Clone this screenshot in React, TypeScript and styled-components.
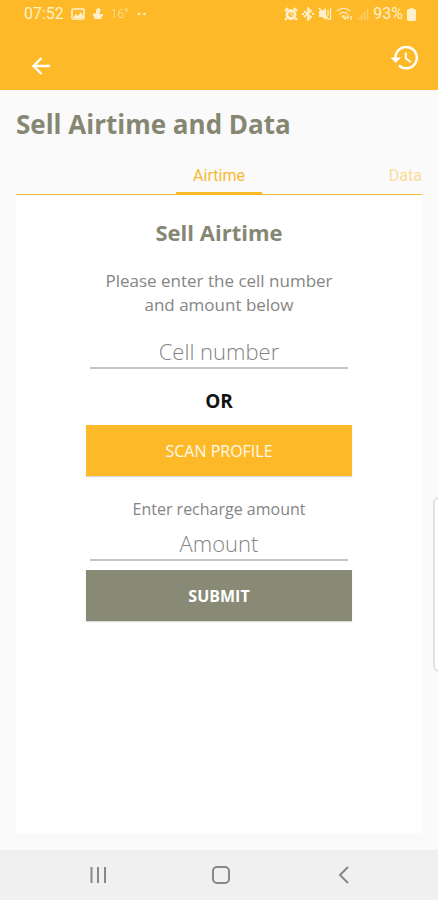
import React from "react";
import styled, { createGlobalStyle } from "styled-components";

const amber = "#fdb927";
const olive = "#868773";

const GlobalStyle = createGlobalStyle`
  *, *::before, *::after { box-sizing: border-box; }
  body { margin: 0; background: #fafafa; font-family: "Open Sans", sans-serif; }
  h1, h2, p { margin: 0; }
  button, input { font-family: inherit; }
`;

const Screen = styled.div`
  position: relative;
  display: flex;
  flex-direction: column;
  min-height: 100vh;
  overflow: hidden;
`;

const Header = styled.header`
  background: ${amber};
`;

const StatusBar = styled.div`
  display: flex;
  align-items: center;
  justify-content: space-between;
  height: 28px;
  padding: 0 22px 0 24px;
  color: #fff0cc;
  font-family: Roboto, sans-serif;
  font-size: 16px;
  line-height: 28px;
`;

const StatusGroup = styled.div<{ $gap: number }>`
  display: flex;
  align-items: center;
  gap: ${(p) => p.$gap}px;
  svg { display: block; flex: none; }
`;

const Temperature = styled.span`
  font-size: 12px;
  font-weight: 300;
  opacity: 0.8;
`;

const AppBar = styled.div`
  display: flex;
  align-items: flex-start;
  justify-content: space-between;
  height: 62px;
  padding: 15px 18px 0 27px;
`;

const IconButton = styled.button<{ $drop?: boolean }>`
  display: flex;
  padding: 0;
  margin-top: ${(p) => (p.$drop ? 9 : 0)}px;
  border: 0;
  background: none;
  color: #fff;
`;

const Main = styled.main`
  display: flex;
  flex: 1;
  flex-direction: column;
  padding: 17px 16px;
`;

const Title = styled.h1`
  color: ${olive};
  font-size: 26px;
  font-weight: 700;
  line-height: 34px;
`;

const Tabs = styled.div`
  display: grid;
  grid-template-columns: 1fr auto 1fr;
  height: 41px;
  margin-top: 13px;
  box-shadow: inset 0 -1px ${amber};
`;

const Tab = styled.button<{ $active?: boolean }>`
  grid-column: ${(p) => (p.$active ? 2 : 3)};
  justify-self: ${(p) => (p.$active ? "center" : "end")};
  padding: 3px ${(p) => (p.$active ? 17 : 0)}px 0;
  border: 0;
  box-shadow: ${(p) => (p.$active ? `inset 0 -3px ${amber}` : "none")};
  background: none;
  color: ${(p) => (p.$active ? "#f6b836" : "#fbdc9c")};
  font-family: Roboto, sans-serif;
  font-size: 16px;
  line-height: 20px;
`;

const Panel = styled.form`
  display: flex;
  flex: 1;
  flex-direction: column;
  padding: 21px 70px;
  background: #fff;
  text-align: center;
`;

const Heading = styled.h2`
  color: ${olive};
  font-size: 22px;
  font-weight: 700;
  line-height: 32px;
`;

const Intro = styled.p`
  margin-top: 21px;
  padding: 0 12px;
  color: #858585;
  font-size: 17px;
  line-height: 24px;
`;

const Field = styled.input<{ $gap: number }>`
  height: 33px;
  margin: ${(p) => p.$gap}px 4px 0;
  padding: 0 0 2px;
  min-width: 0;
  border: 0;
  border-bottom: 2px solid #c4c4c4;
  border-radius: 0;
  outline: 0;
  background: none;
  color: #666;
  font-size: 22px;
  font-weight: 300;
  text-align: center;
  &::placeholder { color: #858585; opacity: 1; }
`;

const Or = styled.p`
  margin-top: 20px;
  color: #111;
  font-size: 19px;
  font-weight: 700;
  line-height: 24px;
`;

const Action = styled.button<{ $primary?: boolean }>`
  height: 51px;
  margin-top: ${(p) => (p.$primary ? 9 : 12)}px;
  padding: 0;
  border: 0;
  background: ${(p) => (p.$primary ? "#898a76" : amber)};
  color: ${(p) => (p.$primary ? "#fff" : "#fffaf0")};
  font-size: 16px;
  font-weight: ${(p) => (p.$primary ? 700 : 400)};
  box-shadow: 0 1px 1px rgba(0, 0, 0, 0.15);
`;

const AmountLabel = styled.label`
  margin-top: 21px;
  color: #858585;
  font-size: 16px;
  line-height: 24px;
`;

const EdgeHandle = styled.div`
  position: absolute;
  top: 497px;
  right: -8px;
  width: 13px;
  height: 175px;
  border: 2px solid #e2e2e2;
  border-radius: 6px;
  background: #fff;
`;

const NavBar = styled.nav`
  display: flex;
  align-items: center;
  justify-content: space-between;
  height: 50px;
  padding: 0 82px 0 86px;
  background: #f0f0f0;
`;

const NavButton = styled.button`
  display: flex;
  padding: 0;
  border: 0;
  background: none;
  color: #888;
`;

const PictureIcon = () => (
  <svg width="14" height="12" viewBox="0 0 14 12">
    <rect x="1" y="1" width="12" height="10" rx="1" fill="none" stroke="currentColor" strokeWidth="1.6" />
    <path d="M2 10 5 6l2 2 3-4 3 6z" fill="currentColor" />
  </svg>
);

const WeatherIcon = () => (
  <svg width="12" height="12" viewBox="0 0 12 12" fill="currentColor">
    <path d="M6 0c2 0 3 2 2 4l-1 2h4v2L9 9l1 2H2l1-2-2-1V6l3-1V2z" />
  </svg>
);

const AlarmIcon = () => (
  <svg width="14" height="14" viewBox="0 0 14 14" fill="none" stroke="currentColor">
    <circle cx="7" cy="7.5" r="4" strokeWidth="2.8" />
    <path d="M1 4 4 1M13 4l-3-3M3 11l-2 2M11 11l2 2" strokeWidth="2.4" />
    <path d="M7 5v3h2" strokeWidth="1" />
  </svg>
);

const BluetoothIcon = () => (
  <svg width="12" height="14" viewBox="0 0 12 14" fill="none" stroke="currentColor" strokeWidth="1.7">
    <path d="m2 4 7 6-3 3V1l3 3-7 6" />
    <path d="M0 7h2M10 7h2" strokeWidth="2" />
  </svg>
);

const MuteIcon = () => (
  <svg width="14" height="14" viewBox="0 0 14 14">
    <path d="M1 4h3l4-3v12L4 10H1z" fill="currentColor" />
    <path d="M1 1l10 12" fill="none" stroke="currentColor" strokeWidth="1.6" />
    <path d="M10 3v6M12.5 1v12" fill="none" stroke="currentColor" strokeWidth="1.3" />
  </svg>
);

const WifiIcon = () => (
  <svg width="17" height="14" viewBox="0 0 17 14" fill="none" stroke="currentColor" strokeWidth="1.3">
    <path d="M1 4c4-3.6 9-3.6 13 0M3.500 7c3-2.500 5-2.500 8 0M5.500 9.500c1.500-1 2.500-1 4 0" />
    <path d="m7 10 2 2 2-2M12 8v4M15 9v4" />
  </svg>
);

const SignalIcon = () => (
  <svg width="12" height="12" viewBox="0 0 12 12" fill="none" stroke="currentColor" opacity="0.4">
    <path d="M1.500 9v3M4.500 7v5M7.500 4v8M10.500 1v11" strokeWidth="1.6" />
  </svg>
);

const BatteryIcon = () => (
  <svg width="9" height="13" viewBox="0 0 9 13" fill="currentColor">
    <path d="M3 0h3v1h2l1 1v10l-1 1H1l-1-1V2l1-1h2z" />
  </svg>
);

const BackArrow = () => (
  <svg width="28" height="28" viewBox="0 0 28 28" fill="none" stroke="currentColor" strokeWidth="2.4">
    <path d="M23 14H7M14.500 6 6.500 14l8 8" />
  </svg>
);

const HistoryIcon = () => (
  <svg width="30" height="30" viewBox="0 0 30 30" fill="none" stroke="currentColor" strokeWidth="2.500">
    <path d="M5.500 15.500a10.700 10.700 0 1 1 3.400 7" />
    <path d="M0.500 14.500h10.500L5.700 20z" fill="currentColor" stroke="none" />
    <path d="M15.800 9.500V15.500l5 3.500" strokeWidth="2" />
  </svg>
);

export default function App() {
  return (
    <>
      <GlobalStyle />
      <Screen>
        <Header>
          <StatusBar>
            <StatusGroup $gap={7}>
              <span>07:52</span>
              <PictureIcon />
              <WeatherIcon />
              <Temperature>16°</Temperature>
              <svg width="12" height="4" viewBox="0 0 12 4" fill="currentColor">
                <circle cx="3" cy="2" r="1.300" />
                <circle cx="8.500" cy="2" r="1.300" />
              </svg>
            </StatusGroup>
            <StatusGroup $gap={4}>
              <AlarmIcon />
              <BluetoothIcon />
              <MuteIcon />
              <WifiIcon />
              <SignalIcon />
              <span>93%</span>
              <BatteryIcon />
            </StatusGroup>
          </StatusBar>
          <AppBar>
            <IconButton $drop type="button" aria-label="Back">
              <BackArrow />
            </IconButton>
            <IconButton type="button" aria-label="History">
              <HistoryIcon />
            </IconButton>
          </AppBar>
        </Header>
        <Main>
          <Title>Sell Airtime and Data</Title>
          <Tabs role="tablist">
            <Tab $active type="button" role="tab" aria-selected="true">Airtime</Tab>
            <Tab type="button" role="tab" aria-selected="false">Data</Tab>
          </Tabs>
          <Panel onSubmit={(e) => e.preventDefault()}>
            <Heading>Sell Airtime</Heading>
            <Intro>Please enter the cell number and amount below</Intro>
            <Field $gap={19} type="tel" placeholder="Cell number" aria-label="Cell number" />
            <Or>OR</Or>
            <Action type="button">SCAN PROFILE</Action>
            <AmountLabel htmlFor="amount">Enter recharge amount</AmountLabel>
            <Field $gap={7} id="amount" inputMode="decimal" placeholder="Amount" />
            <Action $primary type="submit">SUBMIT</Action>
          </Panel>
        </Main>
        <NavBar aria-label="System">
          <NavButton type="button" aria-label="Recent apps">
            <svg width="24" height="24" viewBox="0 0 24 24" stroke="currentColor" strokeWidth="2">
              <path d="M5.500 4v16M12 4v16M19 4v16" />
            </svg>
          </NavButton>
          <NavButton type="button" aria-label="Home">
            <svg width="24" height="24" viewBox="0 0 24 24" fill="none" stroke="currentColor" strokeWidth="2">
              <rect x="4" y="4" width="16" height="16" rx="4" />
            </svg>
          </NavButton>
          <NavButton type="button" aria-label="Back">
            <svg width="24" height="24" viewBox="0 0 24 24" fill="none" stroke="currentColor" strokeWidth="2">
              <path d="m16 4-8 8 8 8" />
            </svg>
          </NavButton>
        </NavBar>
        <EdgeHandle />
      </Screen>
    </>
  );
}
